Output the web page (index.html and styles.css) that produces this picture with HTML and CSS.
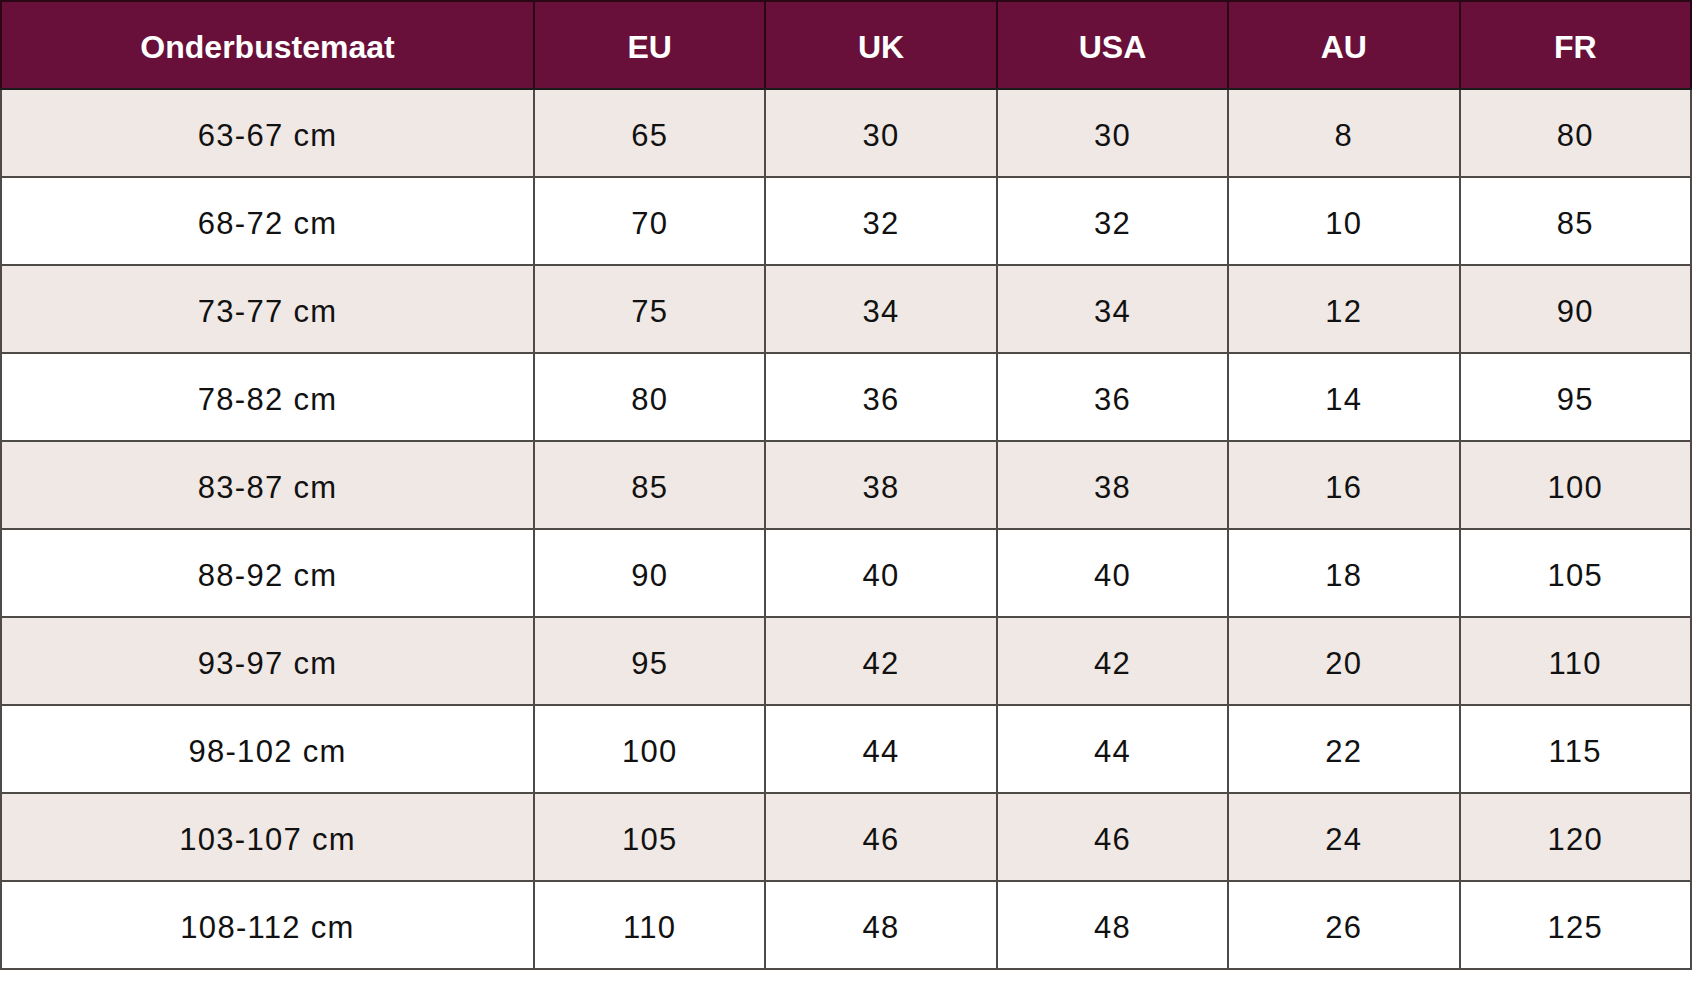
FILE: index.html
```html
<!DOCTYPE html>
<html lang="nl">
<head>
<meta charset="utf-8">
<title>Maattabel</title>
<link rel="stylesheet" href="styles.css">
</head>
<body>
<table class="size-table">
  <colgroup>
    <col class="col-first">
    <col class="col"><col class="col"><col class="col"><col class="col"><col class="col">
  </colgroup>
  <thead>
    <tr><th>Onderbustemaat</th><th>EU</th><th>UK</th><th>USA</th><th>AU</th><th>FR</th></tr>
  </thead>
  <tbody>
    <tr><td>63-67 cm</td><td>65</td><td>30</td><td>30</td><td>8</td><td>80</td></tr>
    <tr><td>68-72 cm</td><td>70</td><td>32</td><td>32</td><td>10</td><td>85</td></tr>
    <tr><td>73-77 cm</td><td>75</td><td>34</td><td>34</td><td>12</td><td>90</td></tr>
    <tr><td>78-82 cm</td><td>80</td><td>36</td><td>36</td><td>14</td><td>95</td></tr>
    <tr><td>83-87 cm</td><td>85</td><td>38</td><td>38</td><td>16</td><td>100</td></tr>
    <tr><td>88-92 cm</td><td>90</td><td>40</td><td>40</td><td>18</td><td>105</td></tr>
    <tr><td>93-97 cm</td><td>95</td><td>42</td><td>42</td><td>20</td><td>110</td></tr>
    <tr><td>98-102 cm</td><td>100</td><td>44</td><td>44</td><td>22</td><td>115</td></tr>
    <tr><td>103-107 cm</td><td>105</td><td>46</td><td>46</td><td>24</td><td>120</td></tr>
    <tr><td>108-112 cm</td><td>110</td><td>48</td><td>48</td><td>26</td><td>125</td></tr>
  </tbody>
</table>
</body>
</html>
```
FILE: styles.css
```css
html, body {
  margin: 0;
  padding: 0;
  background: #ffffff;
}

.size-table {
  border-collapse: collapse;
  table-layout: fixed;
  width: 1690px;
  border: 2px solid #1a1a1a;
}

.col-first { width: 533px; }
.col { width: 231.4px; }

.size-table tr { height: 88px; }

.size-table th,
.size-table td {
  padding: 5px 0 0 0;
  text-align: center;
  vertical-align: middle;
  border: 2px solid #4d4a48;
}

.size-table th {
  background: #69103a;
  color: #ffffff;
  font-family: "Liberation Sans", Arial, sans-serif;
  font-weight: 700;
  font-size: 32px;
  border-color: #2b0716;
  border-bottom-color: #1a1a1a;
}

.size-table td {
  font-family: "Liberation Sans", Arial, sans-serif;
  font-weight: 400;
  font-size: 31px;
  letter-spacing: 1.3px;
  color: #111111;
  background: #ffffff;
}

.size-table tbody tr:nth-child(odd) td {
  background: #f0e8e4;
}
```
